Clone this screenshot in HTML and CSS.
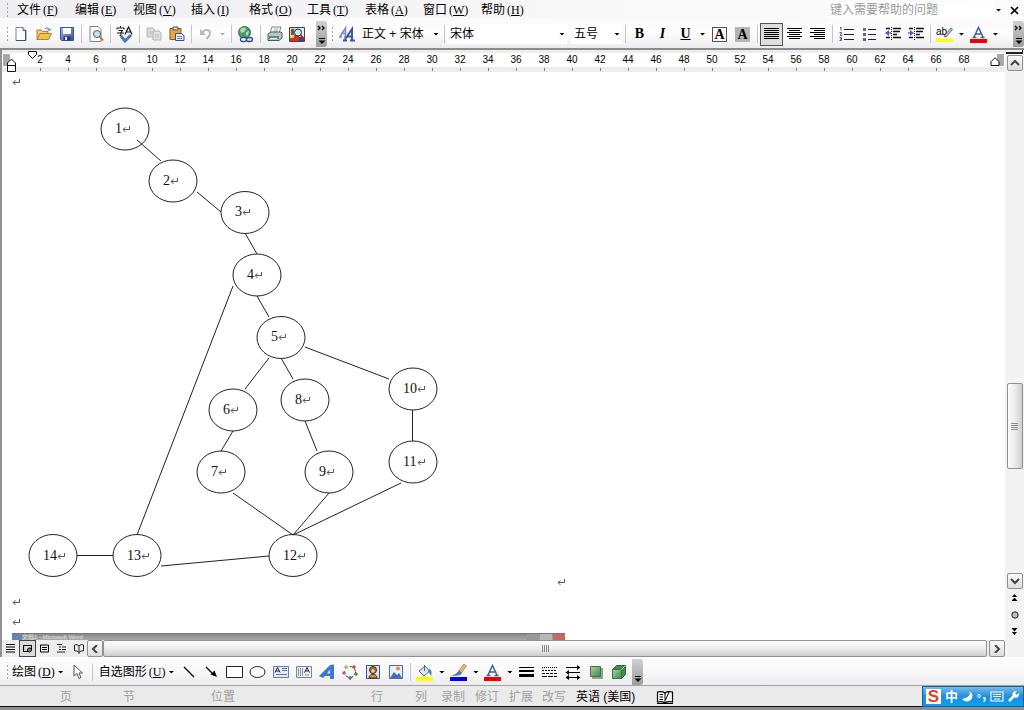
FILE: index.html
```html
<!DOCTYPE html>
<html lang="zh-CN">
<head>
<meta charset="utf-8">
<title>Word</title>
<link rel="stylesheet" href="styles.css">
</head>
<body>
<svg class="defs" aria-hidden="true">
  <defs>
    <symbol id="ret" viewBox="0 0 8 7"><path d="M7.500 0v3.500H1.500M3.500 1.500L1 3.500l2.500 2.500M5 3.500" fill="none" stroke="#444" stroke-width=".9"/></symbol>
    <linearGradient id="blueg" x1="0" y1="0" x2="1" y2="1"><stop offset="0" stop-color="#9db8ec"/><stop offset="1" stop-color="#2f4f9c"/></linearGradient>
    <linearGradient id="greeng" x1="0" y1="0" x2="1" y2="1"><stop offset="0" stop-color="#a5d8a5"/><stop offset="1" stop-color="#3f8546"/></linearGradient>
  </defs>
</svg>

<nav class="menubar">
  <span class="grip"></span>
  <button class="menu">文件<kbd>(<u>F</u>)</kbd></button>
  <button class="menu">编辑<kbd>(<u>E</u>)</kbd></button>
  <button class="menu">视图<kbd>(<u>V</u>)</kbd></button>
  <button class="menu">插入<kbd>(<u>I</u>)</kbd></button>
  <button class="menu">格式<kbd>(<u>O</u>)</kbd></button>
  <button class="menu">工具<kbd>(<u>T</u>)</kbd></button>
  <button class="menu">表格<kbd>(<u>A</u>)</kbd></button>
  <button class="menu">窗口<kbd>(<u>W</u>)</kbd></button>
  <button class="menu">帮助<kbd>(<u>H</u>)</kbd></button>
  <input class="help" type="text" aria-label="帮助" placeholder="键入需要帮助的问题">
  <button class="drop" aria-label="帮助列表"></button>
  <button class="close" aria-label="关闭"><svg width="9" height="9" viewBox="0 0 9 9"><path d="M1 1l7 7M8 1L1 8" stroke="#000" stroke-width="1.700"/></svg></button>
</nav>

<div class="toolbar">
  <span class="grip"></span>
  <button class="tool" aria-label="新建"><svg width="16" height="16" viewBox="0 0 16 16"><path d="M3 1.500h7l3 3v10H3z" fill="#fff" stroke="#6d86a8"/><path d="M10 1.500v3h3" fill="#cfe0f4" stroke="#3c5a86"/><path d="M12.500 5v9.500H3" fill="none" stroke="#31507c"/></svg></button>
  <button class="tool" aria-label="打开"><svg width="16" height="16" viewBox="0 0 16 16"><path d="M1 13.500V4h4l1.500 1.500H12V8" fill="#f6d070" stroke="#a9803a"/><path d="M1 13.500L4 7.500h11.500l-3 6z" fill="#f9c048" stroke="#a9803a"/><path d="M9 3c2-2 4-1 4.500 1M13.500 4.500l1.500-2M13.500 4.500L11.500 3.500" fill="none" stroke="#3e6fb4"/></svg></button>
  <button class="tool" aria-label="保存"><svg width="16" height="16" viewBox="0 0 16 16"><path d="M1.500 1.500h13v13h-12l-1-1z" fill="url(#blueg)" stroke="#3a549c"/><path d="M4 2h8v6H4z" fill="#fff"/><path d="M4.500 10.500h7v4h-7z" fill="#26396f"/><path d="M6 11h2v3H6z" fill="#e8eefc"/></svg></button>
  <span class="sep"></span>
  <button class="tool" aria-label="打印预览"><svg width="16" height="16" viewBox="0 0 16 16"><path d="M2 .5h8l3 3v12H2z" fill="#fff" stroke="#7b8494"/><circle cx="9" cy="8" r="3.500" fill="#cfe2f4" stroke="#46566e"/><path d="M11.500 10.500l3.500 4" stroke="#b98632" stroke-width="2"/></svg></button>
  <span class="sep"></span>
  <button class="tool" aria-label="拼写和语法"><svg width="18" height="17" viewBox="0 0 18 17"><path d="M4.500 0v1.500M1 3.500V2h7v1.500M2.500 4.500H7L5 6v3.500H3.500M1 7h7" fill="none" stroke="#111"/><path d="M9 8.500L12.500 1 16 8.500M10 6h5" fill="none" stroke="#111" stroke-width="1.200"/><path d="M5 10l4 5 6-6" fill="none" stroke="#4b7ab8" stroke-width="3"/></svg></button>
  <span class="sep"></span>
  <button class="tool" aria-label="复制" disabled><svg width="16" height="16" viewBox="0 0 16 16"><path d="M1 2h6l2 2v7H1z" fill="#ddd" stroke="#b8b8b8"/><path d="M7 5h6l2 2v7H7z" fill="#e2e2e2" stroke="#b4b4b4"/><path d="M9 9h4M9 11h4M3 6h3M3 8h3" stroke="#bbb"/></svg></button>
  <button class="tool" aria-label="粘贴"><svg width="16" height="16" viewBox="0 0 16 16"><path d="M1 2.500h11v11H1z" fill="#e9a73c" stroke="#8a5c1e"/><path d="M4 1h5v3H4z" fill="#d9d9d9" stroke="#555"/><path d="M6.500 7.500h6l2.500 2v5H6.500z" fill="#dfe9fa" stroke="#35507f"/><path d="M8 10.500h5M8 12.500h5" stroke="#6f8fc4"/></svg></button>
  <span class="sep"></span>
  <button class="tool" aria-label="撤销" disabled><svg width="16" height="16" viewBox="0 0 16 16"><path d="M4 7c2-4 8-4 8 0 0 3-2 4-3.500 6" fill="none" stroke="#b9b9bd" stroke-width="2"/><path d="M2 3v6h6z" fill="#b9b9bd"/></svg></button>
  <button class="drop off" aria-label="撤销列表" disabled></button>
  <span class="sep"></span>
  <button class="tool" aria-label="超链接"><svg width="17" height="17" viewBox="0 0 17 17"><circle cx="7.500" cy="6.500" r="6" fill="#4a9a6e" stroke="#2d6c78"/><path d="M3 4c2-3 5-3 6-1L7 6 4 7zM9 6l3-1-1 4-2 1z" fill="#a8e0a2"/><rect x="3.500" y="11.500" width="6" height="4" rx="2" fill="#fff" stroke="#34507e" stroke-width="1.300"/><rect x="9.500" y="11.500" width="6" height="4" rx="2" fill="#cfdcf2" stroke="#34507e" stroke-width="1.300"/></svg></button>
  <span class="sep"></span>
  <button class="tool" aria-label="打印"><svg width="16" height="16" viewBox="0 0 16 16"><path d="M5 1h9l-2 6H3z" fill="#fff" stroke="#7a8290"/><path d="M6.500 3h5M6 5h5" stroke="#9aa"/><path d="M1 8l3-2h10l1 1v5l-3 2.500H1z" fill="#b9c8c4" stroke="#48605f"/><path d="M2 10h10v3H2z" fill="#5d8c7c"/><path d="M3 12.500h7" stroke="#e6f6e6"/></svg></button>
  <button class="tool" aria-label="信息检索"><svg width="17" height="17" viewBox="0 0 17 17"><path d="M.5 1.500h15v14H.5z" fill="#f4dd3e" stroke="#444"/><path d="M6 2h9v8H6z" fill="#dce9fb"/><path d="M1 12h7v3H1z" fill="#df2a28"/><path d="M5 9h5v6H5z" fill="#df2a28"/><path d="M2 3h3v6H2z" fill="#5a50a8"/><path d="M10 11h5v4h-5z" fill="#2848b4"/><circle cx="9" cy="6.500" r="3.500" fill="#c7f0f0" stroke="#234"/><path d="M11.500 9l4 5" stroke="#c31d1d" stroke-width="2"/></svg></button>
  <button class="more first" aria-label="工具栏选项"><svg width="11" height="24" viewBox="0 0 11 24"><path d="M2 4l2 2-2 2M6 4l2 2-2 2" fill="none" stroke="#000" stroke-width="1.300"/><path d="M3 16.500h6" stroke="#000"/><path d="M2.500 18.500h7l-3.500 3.500z"/></svg></button>

  <span class="grip mid"></span>
  <button class="tool" aria-label="样式和格式"><svg width="17" height="16" viewBox="0 0 17 16"><path d="M1 10.500L6.500 2v8.500M3 7.500h4M0 11h3M5 11h3" fill="none" stroke="#7d89c0" stroke-width="1.600"/><path d="M6 13.500l7-10.500v11M8.500 10.500h5M4 14.500h4M11 14.500h5" fill="none" stroke="#3e56a6" stroke-width="2"/></svg></button>
  <span class="combo style"><select aria-label="样式"><option>正文 + 宋体</option></select></span>
  <span class="sep"></span>
  <span class="combo font"><select aria-label="字体"><option>宋体</option></select></span>
  <span class="combo size"><select aria-label="字号"><option>五号</option></select></span>
  <span class="sep"></span>
  <button class="tool letter"><b>B</b></button>
  <button class="tool letter"><i>I</i></button>
  <button class="tool letter"><u>U</u></button>
  <button class="drop" aria-label="下划线列表"></button>
  <button class="tool letter"><span class="boxed">A</span></button>
  <button class="tool letter"><span class="shaded">A</span></button>
  <span class="sep"></span>
  <button class="tool pressed" aria-label="两端对齐"><svg width="15" height="12" viewBox="0 0 15 12"><path d="M0 .5h15M0 2.500h15M0 4.500h15M0 6.500h15M0 8.500h15M0 10.500h15" stroke="#000"/></svg></button>
  <button class="tool" aria-label="居中"><svg width="15" height="12" viewBox="0 0 15 12"><path d="M0 .5h15M2 2.500h11M0 4.500h15M2 6.500h11M0 8.500h15M2 10.500h11" stroke="#000"/></svg></button>
  <button class="tool" aria-label="右对齐"><svg width="15" height="12" viewBox="0 0 15 12"><path d="M0 .5h15M4 2.500h11M0 4.500h15M4 6.500h11M0 8.500h15M4 10.500h11" stroke="#000"/></svg></button>
  <span class="sep"></span>
  <button class="tool" aria-label="编号"><svg width="15" height="14" viewBox="0 0 15 14"><path d="M2 0v3.500M1 .5h1M.5 5.500h2v1.500h-1v1.500h2M.5 10.500h2v3h-2M1 12h1" fill="none" stroke="#44589c"/><path d="M5 2.500h10M5 7.500h10M5 12.500h10" stroke="#222"/></svg></button>
  <button class="tool" aria-label="项目符号"><svg width="15" height="14" viewBox="0 0 15 14"><path d="M1 1h3v3H1zM1 6h3v3H1zM1 11h3v3H1z" fill="#5a68a4"/><path d="M6 2.500h8M6 7.500h8M6 12.500h8" stroke="#222"/></svg></button>
  <button class="tool" aria-label="减少缩进"><svg width="16" height="14" viewBox="0 0 16 14"><path d="M1 1.500h4M8 1.500h8M8 4.500h7M8 7.500h4M1 10.500h4M8 10.500h8" stroke="#111" stroke-width="1.400"/><path d="M6.500 0v14" stroke="#111" stroke-dasharray="1 1"/><path d="M4 3L0 6l4 3z" fill="#4a5eab"/><path d="M3 6h3" stroke="#4a5eab" stroke-width="1.400"/></svg></button>
  <button class="tool" aria-label="增加缩进"><svg width="16" height="14" viewBox="0 0 16 14"><path d="M1 1.500h4M8 1.500h8M8 4.500h7M8 7.500h4M1 10.500h4M8 10.500h8" stroke="#111" stroke-width="1.400"/><path d="M6.500 0v14" stroke="#111" stroke-dasharray="1 1"/><path d="M2 3l4 3-4 3z" fill="#4a5eab"/><path d="M0 6h3" stroke="#4a5eab" stroke-width="1.400"/></svg></button>
  <span class="sep"></span>
  <button class="tool" aria-label="突出显示"><svg width="17" height="17" viewBox="0 0 17 17"><text x="0" y="9" class="ab">ab</text><path d="M9 9l6-7 1.500 1.500-6 7-2 .5z" fill="#b9c3da" stroke="#4a5478" stroke-width=".8"/><path d="M0 13h17v3H0z" fill="#ffff00"/></svg></button>
  <button class="drop" aria-label="突出显示颜色"></button>
  <button class="tool" aria-label="字体颜色"><svg width="17" height="17" viewBox="0 0 17 17"><path d="M4 11L8.500 1.500 13 11M5.500 8h6M2.500 11.500h4M10.500 11.500h4" fill="none" stroke="#3d6296" stroke-width="1.500"/><path d="M0 13h17v4H0z" fill="#f00000"/></svg></button>
  <button class="drop" aria-label="字体颜色列表"></button>
  <button class="more last" aria-label="工具栏选项"><svg width="11" height="24" viewBox="0 0 11 24"><path d="M2 4l2 2-2 2M6 4l2 2-2 2" fill="none" stroke="#000" stroke-width="1.300"/><path d="M3 16.500h6" stroke="#000"/><path d="M2.500 18.500h7l-3.500 3.500z"/></svg></button>
</div>

<main class="work">
  <section class="pane">
    <div class="ruler">
      <span class="edge left"></span><span class="edge right"></span>
      <ol class="scale"><li>2</li><li>4</li><li>6</li><li>8</li><li>10</li><li>12</li><li>14</li><li>16</li><li>18</li><li>20</li><li>22</li><li>24</li><li>26</li><li>28</li><li>30</li><li>32</li><li>34</li><li>36</li><li>38</li><li>40</li><li>42</li><li>44</li><li>46</li><li>48</li><li>50</li><li>52</li><li>54</li><li>56</li><li>58</li><li>60</li><li>62</li><li>64</li><li>66</li><li>68</li></ol>
      <svg class="pin first-line" width="9" height="8" viewBox="0 0 9 8"><path d="M.5.5h8v3l-4 4-4-4z" fill="#fff" stroke="#111"/></svg>
      <svg class="pin hanging" width="9" height="14" viewBox="0 0 9 14"><path d="M4.500 1l4 4v8.500h-8V5zM.5 7.500h8" fill="#fff" stroke="#111"/></svg>
      <svg class="pin right-indent" width="10" height="9" viewBox="0 0 10 9"><path d="M5 .7l4 4v3.800H1V4.700z" fill="#fff" stroke="#111"/></svg>
    </div>

    <article class="doc">
      <p><svg class="mark"><use href="#ret"/></svg></p>
      <div class="figure">
        <svg width="544" height="500" viewBox="12 92 544 500" role="img" aria-label="流程图">
          <g class="edges">
            <path d="M137 140L161 161M197 192L221 212M245 233L257 254M257 296L269 317M233 286L137 535M269 358L245 389M281 358L293 379M305 347L389 379M305 421L317 451M233 431L221 451M412.500 410V441M233 493L293 535M329 493L293 535M401 483L293 535M161 566L269 556M77 555.500H113"/>
          </g>
          <g class="nodes">
            <ellipse cx="125" cy="129" rx="24" ry="21"/><ellipse cx="173" cy="181" rx="24" ry="21"/>
            <ellipse cx="245" cy="212.500" rx="24" ry="21"/><ellipse cx="257" cy="275" rx="24" ry="21"/>
            <ellipse cx="281" cy="337.500" rx="24" ry="21"/><ellipse cx="233" cy="410" rx="24" ry="21"/>
            <ellipse cx="221" cy="472" rx="24" ry="21"/><ellipse cx="305" cy="400" rx="24" ry="21"/>
            <ellipse cx="329" cy="472" rx="24" ry="21"/><ellipse cx="413" cy="389" rx="24" ry="21"/>
            <ellipse cx="413" cy="462" rx="24" ry="21"/><ellipse cx="293" cy="555.500" rx="24" ry="21"/>
            <ellipse cx="137" cy="555.500" rx="24" ry="21"/><ellipse cx="53" cy="555.500" rx="24" ry="21"/>
          </g>
          <g class="labels">
            <text x="115" y="133">1</text><text x="163" y="185">2</text><text x="235" y="216">3</text><text x="247" y="279">4</text>
            <text x="271" y="341">5</text><text x="223" y="414">6</text><text x="211" y="476">7</text><text x="295" y="404">8</text>
            <text x="319" y="476">9</text><text x="403" y="393">10</text><text x="403" y="466">11</text><text x="283" y="560">12</text>
            <text x="127" y="560">13</text><text x="43" y="560">14</text>
          </g>
          <g>
            <use href="#ret" x="122" y="126" width="8" height="7"/><use href="#ret" x="170" y="178" width="8" height="7"/>
            <use href="#ret" x="242" y="209" width="8" height="7"/><use href="#ret" x="254" y="272" width="8" height="7"/>
            <use href="#ret" x="278" y="334" width="8" height="7"/><use href="#ret" x="230" y="407" width="8" height="7"/>
            <use href="#ret" x="218" y="469" width="8" height="7"/><use href="#ret" x="302" y="397" width="8" height="7"/>
            <use href="#ret" x="326" y="469" width="8" height="7"/><use href="#ret" x="417" y="386" width="8" height="7"/>
            <use href="#ret" x="417" y="459" width="8" height="7"/><use href="#ret" x="297" y="553" width="8" height="7"/>
            <use href="#ret" x="141" y="553" width="8" height="7"/><use href="#ret" x="57" y="553" width="8" height="7"/>
          </g>
        </svg>
        <svg class="mark"><use href="#ret"/></svg>
      </div>
      <p><svg class="mark"><use href="#ret"/></svg></p>
      <p><svg class="mark"><use href="#ret"/></svg></p>
      <div class="strip"><i class="app"></i><span>文档1 - Microsoft Word</span><i class="min"></i><i class="max"></i><i class="x"></i></div>
    </article>

    <div class="hbar">
      <button class="view" aria-label="普通视图"><svg width="9" height="9" viewBox="0 0 9 9"><path d="M0 .5h9M0 3h9M0 5.500h9M0 8h9" stroke="#000" stroke-width="1.200"/></svg></button>
      <button class="view on" aria-label="Web 版式视图"><svg width="9" height="9" viewBox="0 0 9 9"><path d="M5 7.500H.5v-6h8V5" fill="none" stroke="#000" stroke-width="1.200"/><circle cx="6.500" cy="6" r="2" fill="#888" stroke="#000"/></svg></button>
      <button class="view" aria-label="页面视图"><svg width="9" height="9" viewBox="0 0 9 9"><path d="M.5 1h8v7h-8zM2 3.500h5M2 5.500h5" fill="none" stroke="#000"/></svg></button>
      <button class="view" aria-label="大纲视图"><svg width="9" height="9" viewBox="0 0 9 9"><path d="M0 .5h5M2 3h2M5 3h4M2 5.500h2M5 5.500h4M0 8h8" stroke="#222"/></svg></button>
      <button class="view" aria-label="阅读版式"><svg width="10" height="10" viewBox="0 0 10 10"><path d="M5 2C4 .5 2 .5.500 1v6C2 6.500 4 7 5 8.500 6 7 8 6.500 9.500 7V1C8 .5 6 .5 5 2zM5 2v8" fill="none" stroke="#222"/></svg></button>
      <button class="arrow left" aria-label="向左滚动"><svg width="8" height="8" viewBox="0 0 8 8"><path d="M6 0L2 4l4 4" fill="none" stroke="#444" stroke-width="2"/></svg></button>
      <div class="hthumb"><i></i><i></i><i></i><i></i></div>
      <button class="arrow right" aria-label="向右滚动"><svg width="8" height="8" viewBox="0 0 8 8"><path d="M2 0l4 4-4 4" fill="none" stroke="#444" stroke-width="2"/></svg></button>
    </div>
  </section>

  <aside class="vbar">
    <span class="split"></span>
    <button class="arrow up" aria-label="向上滚动"><svg width="10" height="8" viewBox="0 0 10 8"><path d="M1 6l4-4 4 4" fill="none" stroke="#444" stroke-width="2"/></svg></button>
    <span class="above"></span>
    <div class="vthumb"><i></i><i></i><i></i><i></i></div>
    <span class="below"></span>
    <button class="arrow down" aria-label="向下滚动"><svg width="10" height="8" viewBox="0 0 10 8"><path d="M1 2l4 4 4-4" fill="none" stroke="#444" stroke-width="2"/></svg></button>
    <button class="browse" aria-label="前一页"><svg width="7" height="7" viewBox="0 0 7 7"><path d="M3.500 0L6 3H1zM3.500 3.500L6.500 7h-6z"/></svg></button>
    <button class="browse" aria-label="选择浏览对象"><svg width="8" height="8" viewBox="0 0 8 8"><circle cx="4" cy="4" r="3.200" fill="#bbb" stroke="#222"/></svg></button>
    <button class="browse" aria-label="下一页"><svg width="7" height="7" viewBox="0 0 7 7"><path d="M.5 0h6l-3 3.500zM1 4h5L3.500 7z"/></svg></button>
  </aside>
</main>

<div class="drawbar">
  <span class="grip"></span>
  <button class="text">绘图<kbd>(<u>D</u>)</kbd><i class="tri"></i></button>
  <button class="tool" aria-label="选择对象"><svg width="16" height="16" viewBox="0 0 16 16"><path d="M4 1v11l3-2.500 2 5 2-1-2-4.500h3.500z" fill="#fff" stroke="#555"/></svg></button>
  <span class="sep"></span>
  <button class="text">自选图形<kbd>(<u>U</u>)</kbd><i class="tri"></i></button>
  <button class="tool" aria-label="直线"><svg width="16" height="16" viewBox="0 0 16 16"><path d="M3 3l10 10" stroke="#000" stroke-width="1.200"/></svg></button>
  <button class="tool" aria-label="箭头"><svg width="16" height="16" viewBox="0 0 16 16"><path d="M2 3l8 8" stroke="#000" stroke-width="1.200"/><path d="M13 13L6.500 10.500l4-4z"/></svg></button>
  <button class="tool" aria-label="矩形"><svg width="17" height="16" viewBox="0 0 17 16"><path d="M.5 2.500h16v11H.5z" fill="#fff" stroke="#222"/></svg></button>
  <button class="tool" aria-label="椭圆"><svg width="17" height="16" viewBox="0 0 17 16"><ellipse cx="8.500" cy="8" rx="7.500" ry="5.500" fill="#fff" stroke="#222"/></svg></button>
  <button class="tool" aria-label="文本框"><svg width="16" height="16" viewBox="0 0 16 16"><path d="M.5 2.500h15v11H.5z" fill="#e4ecfa" stroke="#6b7fa8"/><path d="M2 8.500l2.500-5 2.500 5M3 7h3" fill="none" stroke="#223"/><path d="M9 4.500h5M9 6.500h5M3 10.500h11" stroke="#5a73b0"/></svg></button>
  <button class="tool" aria-label="竖排文本框"><svg width="16" height="16" viewBox="0 0 16 16"><path d="M.5 2.500h15v11H.5z" fill="#eef0f4" stroke="#7d8598"/><path d="M8.500 8.500l2.500-5 2.500 5M9.500 7h3" fill="none" stroke="#223"/><path d="M2.500 4v8M4.500 4v8M6.500 4v8M10 10v2M12 10v2" stroke="#8b93aa"/></svg></button>
  <button class="tool" aria-label="艺术字"><svg width="16" height="16" viewBox="0 0 16 16"><path d="M0 12L11 1l4-.5V15h-4v-3H6l-2 2z" fill="#3f78cc"/><path d="M8 9.500h3v-4z" fill="#dcebff"/></svg></button>
  <button class="tool" aria-label="组织结构图"><svg width="16" height="16" viewBox="0 0 16 16"><circle cx="8" cy="8" r="5.500" fill="none" stroke="#444" stroke-dasharray="3 2"/><circle cx="4" cy="3" r="1.700" fill="#dcae48"/><circle cx="12" cy="3" r="1.700" fill="#c04a3c"/><circle cx="14" cy="10" r="1.700" fill="#4d8a52"/><circle cx="8" cy="14" r="1.700" fill="#5062a8"/><circle cx="2" cy="9" r="1.700" fill="#b05a88"/></svg></button>
  <button class="tool" aria-label="剪贴画"><svg width="16" height="16" viewBox="0 0 16 16"><path d="M1.500 1.500h13v13h-13z" fill="#dbe6f8" stroke="#40557e"/><circle cx="8" cy="6" r="3.500" fill="#b0702c" stroke="#4a2c14"/><circle cx="8" cy="7" r="1.800" fill="#f4cf9b"/><path d="M4 14c0-5 8-5 8 0z" fill="#d09a3a" stroke="#4a2c14"/></svg></button>
  <button class="tool" aria-label="图片"><svg width="16" height="16" viewBox="0 0 16 16"><path d="M1.500 1.500h13v13h-13z" fill="#e9f1ff" stroke="#506aa2"/><circle cx="10" cy="4.500" r="2" fill="#e28c4a"/><path d="M2 14l4-6 3 3 2-2 3 5z" fill="#4a6ab2"/></svg></button>
  <span class="sep"></span>
  <button class="tool" aria-label="填充颜色"><svg width="17" height="17" viewBox="0 0 17 17"><path d="M3 7l6-5 4.500 5-5.500 5z" fill="#d9e6f8" stroke="#4a6690"/><path d="M8.500 7V1" stroke="#4a6690"/><path d="M13 5c3 1 3 4 2 7-1-2-2-4-3-4" fill="#4a78ba"/><path d="M0 13h17v4H0z" fill="#ffff00"/></svg></button>
  <button class="drop" aria-label="填充颜色列表"></button>
  <button class="tool" aria-label="线条颜色"><svg width="17" height="17" viewBox="0 0 17 17"><path d="M14 0l2.500 2-5 7-3-2z" fill="#e0bd72" stroke="#8a733e" stroke-width=".6"/><path d="M9 6.500l3 2.500c-2 3-5 3-11 2.500 4-.5 6-2.500 8-5z" fill="#4c74b8"/><path d="M0 13h17v4H0z" fill="#0000f0"/></svg></button>
  <button class="drop" aria-label="线条颜色列表"></button>
  <button class="tool" aria-label="字体颜色"><svg width="17" height="17" viewBox="0 0 17 17"><path d="M4 11L8.500 1.500 13 11M5.500 8h6M2.500 11.500h4M10.500 11.500h4" fill="none" stroke="#3d6296" stroke-width="1.500"/><path d="M0 13h17v4H0z" fill="#f00000"/></svg></button>
  <button class="drop" aria-label="字体颜色列表"></button>
  <button class="tool" aria-label="线型"><svg width="15" height="12" viewBox="0 0 15 12"><path d="M0 1.500h15" stroke="#000"/><path d="M0 5h15" stroke="#000" stroke-width="2"/><path d="M0 9.500h15" stroke="#000" stroke-width="3"/></svg></button>
  <button class="tool" aria-label="虚线线型"><svg width="15" height="12" viewBox="0 0 15 12"><path d="M0 1.500h15" stroke="#000" stroke-dasharray="1 1"/><path d="M0 4.500h15" stroke="#000" stroke-dasharray="2 1"/><path d="M0 7.500h15" stroke="#000" stroke-dasharray="3 1"/><path d="M0 10.500h15" stroke="#000" stroke-dasharray="5 1"/></svg></button>
  <button class="tool" aria-label="箭头样式"><svg width="16" height="16" viewBox="0 0 16 16"><path d="M1 3.500h12M3 8.500h12M2 13.500h12" stroke="#000"/><path d="M15.500 3.500L12 1v5zM.5 8.500L4 6v5zM.5 13.500L4 11v5zM15.500 13.500L12 11v5z"/></svg></button>
  <button class="tool" aria-label="阴影样式"><svg width="16" height="16" viewBox="0 0 16 16"><path d="M4 4h11v11H4z" fill="#9a9a9a"/><path d="M2.500 2.500h10v10h-10z" fill="url(#greeng)" stroke="#3c7642"/></svg></button>
  <button class="tool" aria-label="三维效果样式"><svg width="16" height="16" viewBox="0 0 16 16"><path d="M1.500 5.500l4-4h9v9l-4 4z" fill="#4a8a50" stroke="#2f6838"/><path d="M1.500 5.500h9v9h-9z" fill="url(#greeng)" stroke="#3c7642"/><path d="M10.500 5.500l4-4" stroke="#a8dcaa"/></svg></button>
  <button class="more only" aria-label="工具栏选项"><svg width="11" height="24" viewBox="0 0 11 24"><path d="M3 16.500h6" stroke="#000"/><path d="M2.500 18.500h7l-3.500 3.500z"/></svg></button>
</div>

<footer class="status">
  <div class="cells">
    <span>页</span><span>节</span><span>位置</span><span>行</span><span>列</span><span>录制</span><span>修订</span><span>扩展</span><span>改写</span><span class="lang">英语 (美国)</span>
    <svg width="18" height="14" viewBox="0 0 18 14"><path d="M9 3C7 1.500 4 1.500 1.500 2v10C4 11.500 7 11.500 9 13c2-1.500 5-1.500 7.500-1V2C14 1.500 11 1.500 9 3z" fill="#fff" stroke="#000" stroke-width="1.200"/><path d="M9 3v10M3.500 4.500H7M3.500 7H7M3.500 9.500H7M9.500 10L13 2" fill="none" stroke="#000"/><path d="M1 13.500h16" stroke="#000"/></svg>
  </div>
  <div class="ime">
    <b class="logo">S</b><span class="zh">中</span>
    <svg width="11" height="11" viewBox="0 0 11 11"><path d="M7 0c2 3 1 6-7 8 3 4 10 3 10.500-3C10.500 3 9 1 7 0z" fill="#fff"/></svg>
    <svg width="9" height="11" viewBox="0 0 9 11"><circle cx="2" cy="5" r="1.500" fill="none" stroke="#fff"/><path d="M6 7h2v2l-1.500 2" fill="none" stroke="#fff" stroke-width="1.300"/></svg>
    <svg width="14" height="11" viewBox="0 0 14 11"><path d="M1 1h12v9H1zM3 3.500h8M3 5.500h8M4 8h6" fill="none" stroke="#fff" stroke-width="1.100"/></svg>
    <svg width="11" height="11" viewBox="0 0 11 11"><path d="M1 10l5-5" stroke="#fff" stroke-width="2.500"/><path d="M9.500 3.500L7.500 3.500 7.500 1.500 9 .3A3.300 3.300 0 1 0 10.800 2z" fill="#fff"/></svg>
  </div>
</footer>
</body>
</html>
```
FILE: styles.css
```css
* {
  box-sizing: border-box;
}

body {
  display: flex;
  flex-direction: column;
  min-height: 100vh;
  margin: 0;
  background: #f6f6f8;
  color: #000;
  font: 12px/16px "Liberation Sans", "Noto Sans CJK SC", sans-serif;
}

button, input, select {
  margin: 0;
  padding: 0;
  border: 0;
  background: none;
  color: inherit;
  font: inherit;
}

svg {
  display: block;
  flex: none;
}

kbd {
  margin-left: 2px;
  font: 12px/16px "Liberation Serif", serif;
}

.defs {
  position: absolute;
  width: 0;
  height: 0;
}

/* Shared toolbar parts */
.menubar, .toolbar, .drawbar {
  display: flex;
  align-items: center;
  white-space: nowrap;
}

.grip {
  flex: none;
  width: 3px;
  height: 16px;
  margin-left: 6px;
  background: radial-gradient(circle, #a8a8ac 1px, transparent 1px) 0 0 / 3px 4px;
}

.grip.mid {
  margin-left: 4px;
  margin-right: 2px;
}

.sep {
  flex: none;
  width: 6px;
  height: 18px;
  background: linear-gradient(#c3c6cc, #c3c6cc) center / 1px 100% no-repeat;
}

.tool {
  display: grid;
  flex: none;
  place-items: center;
  width: 23px;
  height: 23px;
}

.pressed {
  border: 1px solid #555;
  background: #dedede;
}

.drop {
  flex: none;
  width: 11px;
  height: 20px;
}

.drop::after, .tri, .combo::after {
  display: block;
  width: 6px;
  height: 3px;
  margin: auto;
  background: #000;
  clip-path: polygon(0 0, 100% 0, 50% 100%);
  content: "";
}

.drop.off::after {
  background: #aaa;
}

.more {
  display: grid;
  flex: none;
  place-items: center;
  width: 11px;
  height: 26px;
  border-radius: 0 3px 3px 0;
  background: linear-gradient(#d0d0d0, #9c9c9c);
}

.more.first {
  margin-left: 7px;
}

.more.last {
  margin-left: auto;
}

.more.only {
  margin-left: 2px;
}

/* Menu bar */
.menubar {
  height: 18px;
  padding-top: 2px;
  background: linear-gradient(90deg, #eeeef1, #f8f8f9 55%, #fcfcfc);
}

.menu {
  width: 58px;
  padding-left: 8px;
  text-align: left;
}

.help {
  width: 163px;
  height: 16px;
  margin-left: auto;
  background: #fff;
}

.help::placeholder {
  color: #999;
  opacity: 1;
}

.close {
  display: grid;
  place-items: center;
  width: 20px;
}

/* Main toolbar */
.toolbar {
  height: 32px;
  padding-top: 2px;
  border-bottom: 2px solid #8c8c8c;
  background: linear-gradient(#fafafa, #fdfdfd 50%, #ececee);
}

.combo {
  display: grid;
  flex: none;
  align-items: center;
  height: 20px;
}

.combo select, .combo::after {
  grid-area: 1 / 1;
}

.combo select {
  width: 100%;
  height: 20px;
  padding-left: 3px;
  appearance: none;
}

.combo::after {
  margin: 0 2px 0 auto;
  pointer-events: none;
}

.style {
  width: 82px;
}

.font {
  width: 120px;
  background: #fff;
}

.size {
  width: 51px;
  margin-left: 4px;
  background: #fff;
}

.letter {
  font: 700 14px/16px "Liberation Serif", serif;
}

.boxed, .shaded {
  width: 15px;
  border: 1px solid #555;
  line-height: 13px;
}

.shaded {
  border-color: #b4b4b4;
  background: #b4b4b4;
}

.ab {
  font: 10px "Liberation Sans", sans-serif;
}

/* Work area */
.work {
  display: flex;
  flex: 1;
  background: #f3f3f4;
}

.pane {
  display: flex;
  flex: 1;
  flex-direction: column;
  min-width: 0;
  border-left: 2px solid #929296;
}

.ruler {
  position: relative;
  height: 22px;
  padding-top: 3px;
  background: #ededee;
}

.scale {
  display: flex;
  height: 18px;
  margin: 0;
  padding: 0 0 0 24px;
  background: linear-gradient(#fff 14px, transparent 14px);
  font-size: 10px;
  line-height: 14px;
  list-style: none;
  overflow: hidden;
}

.scale li {
  flex: none;
  width: 28px;
  background: linear-gradient(#888, #888) 50% 100% / 1px 3px no-repeat;
  text-align: center;
}

.edge {
  position: absolute;
  top: 4px;
  width: 7px;
  height: 12px;
  background: #a8a8aa;
}

.edge.left {
  left: 1px;
}

.edge.right {
  right: 1px;
}

.pin {
  position: absolute;
}

.first-line {
  top: 1px;
  left: 26px;
}

.hanging {
  top: 8px;
  left: 5px;
}

.right-indent {
  top: 7px;
  right: 5px;
}

.doc {
  display: flex;
  flex: 1;
  flex-direction: column;
  padding-left: 10px;
  background: #fff;
}

.doc p {
  display: flex;
  align-items: center;
  height: 20px;
  margin: 0;
}

.mark {
  width: 8px;
  height: 7px;
}

.figure {
  display: flex;
  align-items: flex-end;
}

.figure .mark {
  margin: 0 0 6px 1px;
}

.edges, .nodes {
  fill: none;
  stroke: #222;
  stroke-width: 1;
}

.labels {
  fill: #111;
  font: 14px "Liberation Serif", serif;
}

.strip {
  display: flex;
  width: 553px;
  height: 7px;
  margin-top: auto;
  border-top: 1px solid #777;
  background: linear-gradient(#8a8a8a, #a8a8a8);
}

.strip span {
  flex: 1;
  color: #e4e4e4;
  font-size: 6px;
  line-height: 6px;
}

.strip i {
  width: 12px;
  margin-left: 1px;
  background: #9a9a9a;
}

.strip .app {
  width: 10px;
  margin: 0;
  background: #5f86b0;
}

.strip .max {
  background: #b4bab4;
}

.strip .x {
  background: #c9675c;
}

/* Scroll bars */
.arrow, .hthumb, .vthumb {
  display: flex;
  align-items: center;
  justify-content: center;
  border: 1px solid #909094;
  border-radius: 2px;
}

.arrow {
  flex: none;
  width: 16px;
  height: 17px;
  background: linear-gradient(#fafafa, #dcdcdc);
}

.hbar {
  display: flex;
  align-items: center;
  height: 17px;
  background: #ededee;
}

.view {
  display: grid;
  place-items: center;
  width: 17px;
  height: 17px;
}

.on {
  border: 1px solid #444;
  background: #dcdcdc;
}

.hthumb {
  flex: 1;
  gap: 1px;
  height: 17px;
  margin-right: 2px;
  background: linear-gradient(#fdfdfd, #ececec 50%, #cfcfcf);
}

.hthumb i {
  width: 1px;
  height: 7px;
  background: #888;
}

.vbar {
  display: flex;
  flex-direction: column;
  align-items: center;
  width: 19px;
  padding-bottom: 17px;
}

.vbar .arrow {
  height: 16px;
}

.split {
  width: 17px;
  height: 4px;
  margin-bottom: 1px;
  border-right: 1px solid #222;
  border-bottom: 2px solid #222;
}

.above {
  flex: 3;
}

.below {
  flex: 1;
}

.vthumb {
  flex-direction: column;
  gap: 1px;
  width: 16px;
  height: 86px;
  background: linear-gradient(90deg, #fdfdfd, #ececec 50%, #cfcfcf);
}

.vthumb i {
  width: 7px;
  height: 1px;
  background: #888;
}

.browse {
  display: grid;
  place-items: center;
  width: 16px;
  height: 17px;
}

/* Drawing toolbar */
.drawbar {
  height: 29px;
  padding-top: 2px;
  border-bottom: 1px solid #a2a2a6;
  background: linear-gradient(#fcfcfc, #f9f9fa 50%, #ededef);
}

.text {
  display: flex;
  align-items: center;
  padding: 0 3px;
}

.tri {
  margin-left: 3px;
}

/* Status bar */
.status {
  display: flex;
  height: 24px;
  border-bottom: 3px solid #8e8e8e;
  background: linear-gradient(transparent 20px, #111 20px), #eaeaeb;
}

.cells {
  display: grid;
  flex: 1;
  grid-template-columns: 63px 88px 160px 44px 26px 34px 34px 33px 34px 80px auto;
  align-items: center;
  justify-content: start;
  height: 21px;
  padding-left: 60px;
  color: #a0a0a0;
}

.lang {
  color: #000;
}

.ime {
  display: flex;
  align-items: center;
  justify-content: space-between;
  width: 102px;
  height: 21px;
  padding: 0 4px 0 3px;
  border: 1px solid #1b5f98;
  background: linear-gradient(#7cb8e8, #1f8fe0 50%, #08a0f0);
  color: #fff;
}

.logo {
  width: 15px;
  height: 15px;
  background: #fff;
  color: #e8401c;
  font-size: 17px;
  line-height: 15px;
  text-align: center;
}

.zh {
  font-size: 13px;
  font-weight: 700;
}
```
